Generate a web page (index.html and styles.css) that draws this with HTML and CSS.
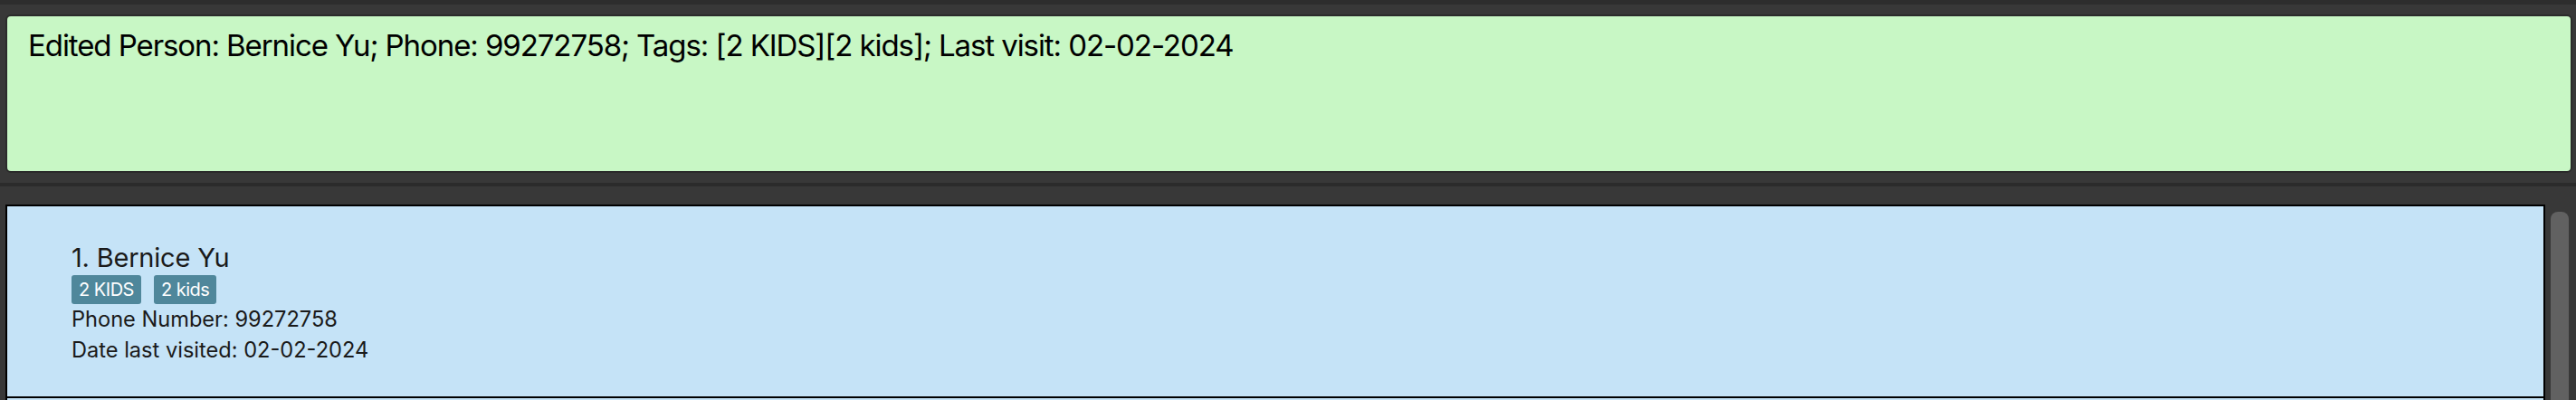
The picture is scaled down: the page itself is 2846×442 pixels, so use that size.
FILE: index.html
```html
<!DOCTYPE html>
<html>
<head>
<meta charset="utf-8">
<link rel="stylesheet" href="styles.css">
</head>
<body>
<div class="app">
  <div class="topstrip"></div>
  <div class="result-pane">
    <div class="result-box">
      <div class="result-text">Edited Person: Bernice Yu; Phone: 99272758; Tags: [2 KIDS][2 kids]; Last visit: 02-02-2024</div>
    </div>
  </div>
  <div class="divider"></div>
  <div class="list-pane">
    <div class="list">
      <div class="card">
        <div class="name">1. Bernice Yu</div>
        <div class="tags">
          <span class="tag">2 KIDS</span>
          <span class="tag">2 kids</span>
        </div>
        <div class="field">Phone Number: 99272758</div>
        <div class="field">Date last visited: 02-02-2024</div>
      </div>
      <div class="card card-next"></div>
    </div>
    <div class="scrollbar"><div class="thumb"></div></div>
  </div>
</div>
</body>
</html>
```
FILE: styles.css
```css
html, body {
  margin: 0;
  padding: 0;
  background: #383838;
  overflow: hidden;
}
.app {
  width: 2846px;
  height: 442px;
  overflow: hidden;
  font-family: Inter, "Noto Sans", sans-serif;
  display: flex;
  flex-direction: column;
}
.topstrip {
  height: 5px;
  background: #2d2d2d;
  flex: none;
}
.result-pane {
  padding: 11px 4px 11px 6px;
  flex: none;
}
.result-box {
  border: 2px solid #2b2b2b;
  border-radius: 6px;
  background: #c8f7c5;
  padding: 12px 0 0 23px;
  box-sizing: border-box;
  height: 175px;
}
.result-text {
  font-size: 33px;
  line-height: 40px;
  color: #000;
  letter-spacing: -1.08px;
  white-space: nowrap;
}
.divider {
  height: 4px;
  background: #2b2b2b;
  flex: none;
}
.list-pane {
  flex: 1;
  display: flex;
  padding: 20px 8px 0 6px;
  gap: 6px;
  min-height: 0;
}
.list {
  flex: 1;
  display: flex;
  flex-direction: column;
}
.card {
  flex: none;
  border: 2px solid #000;
  background: #c5e3f7;
  padding: 39px 0 34px 71px;
}
.card-next {
  border-top: none;
  height: 40px;
  padding: 0;
}
.name {
  font-size: 29px;
  line-height: 35px;
  letter-spacing: -0.2px;
  color: #1a1a1a;
  margin-bottom: 2px;
}
.tags {
  display: flex;
  gap: 14px;
  height: 32px;
}
.tag {
  background: #4f879b;
  color: #fff;
  font-size: 20px;
  line-height: 32px;
  letter-spacing: -0.5px;
  padding: 0 8px;
  border-radius: 3px;
}
.field {
  font-size: 23.6px;
  line-height: 34px;
  color: #1a1a1a;
}
.scrollbar {
  width: 20px;
  flex: none;
  padding-top: 8px;
}
.thumb {
  height: 400px;
  background: #616161;
  border-radius: 8px;
}
```
